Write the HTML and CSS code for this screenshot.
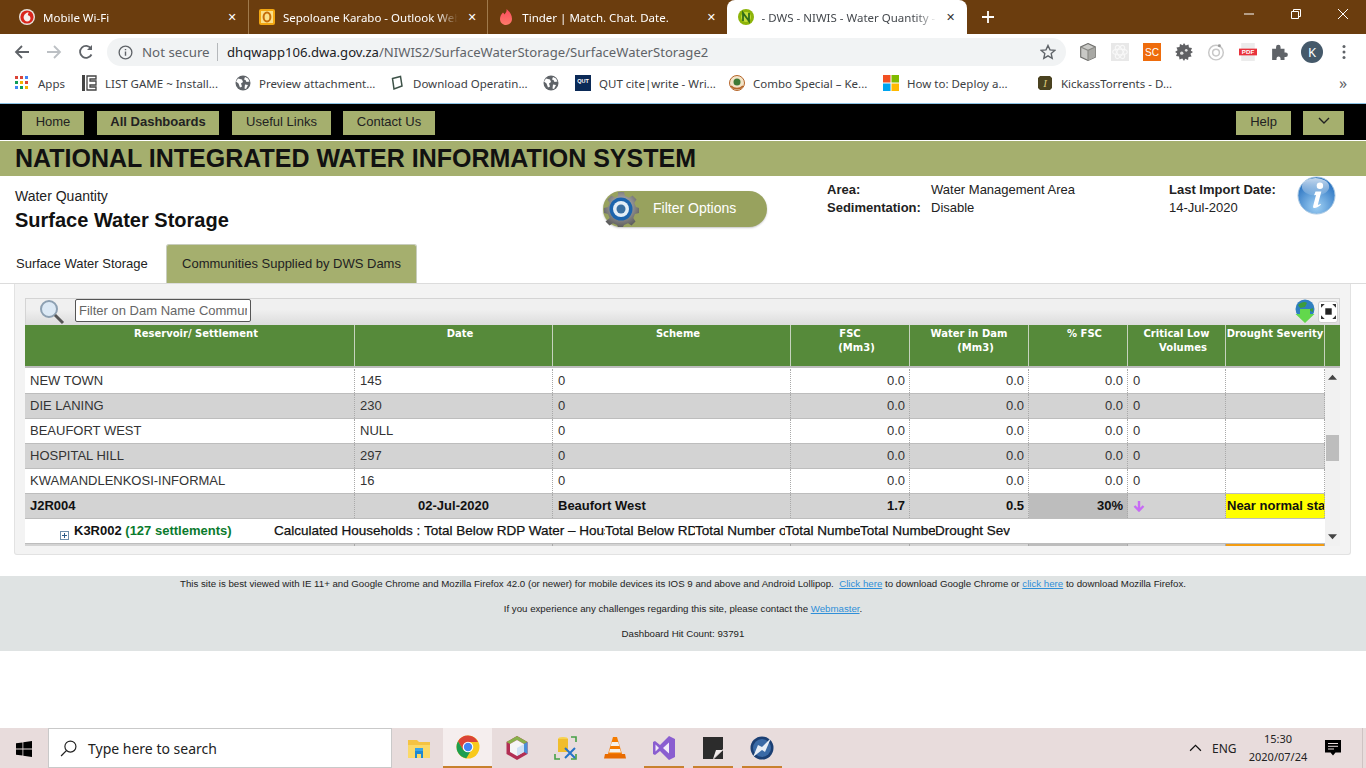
FILE: index.html
```html
<!DOCTYPE html>
<html lang="en">
<head>
<meta charset="utf-8">
<title>DWS - NIWIS - Water Quantity</title>
<link rel="stylesheet" href="styles.css">
</head>
<body>
<div class="tabstrip">
  <div class="tab">
    <svg class="fav" viewBox="0 0 16 16"><circle cx="8" cy="8" r="8" fill="#e8e4e0"/><circle cx="8" cy="8" r="6.600" fill="#d9261c"/><path d="M9.600 3.200C7 3.600 4.600 5.800 4.600 8.600c0 2.400 1.800 3.900 3.600 3.900 2 0 3.300-1.500 3.300-3.200 0-2-1.500-2.700-2.600-3 0-1 .4-1.800.7-3.100z" fill="#f4f0ee"/></svg>
    <span class="tabtitle">Mobile Wi-Fi</span><span class="tabx">✕</span>
  </div>
  <div class="tab tabsep">
    <svg class="fav" viewBox="0 0 16 16"><rect x="0" y="0" width="16" height="16" rx="2" fill="#f3a712"/><rect x="2" y="2" width="12" height="12" fill="#fbe08a"/><ellipse cx="8" cy="8" rx="3.400" ry="4.600" fill="none" stroke="#c46c0a" stroke-width="2"/></svg>
    <span class="tabtitle">Sepoloane Karabo - Outlook Web</span><span class="tabx">✕</span>
  </div>
  <div class="tab tabsep">
    <svg class="fav" viewBox="0 0 16 16"><defs><linearGradient id="tg" x1="0" y1="0" x2="0" y2="1"><stop offset="0" stop-color="#fd4a5e"/><stop offset="1" stop-color="#ff7a6a"/></linearGradient></defs><path d="M8.500 0c.5 3-1 4-2 5.500C6 4.500 5.500 4 5 3.500 3 5.500 2 7.500 2 10c0 3.500 2.700 6 6 6s6-2.500 6-6C14 5.500 11 2 8.500 0z" fill="url(#tg)"/></svg>
    <span class="tabtitle">Tinder | Match. Chat. Date.</span><span class="tabx">✕</span>
  </div>
  <div class="tab tabactive">
    <svg class="fav" viewBox="0 0 16 16"><circle cx="8" cy="8" r="8" fill="#8db40a"/><circle cx="8" cy="8" r="5" fill="#c4dc3a"/><path d="M5 12V4l6 8V4" fill="none" stroke="#2f6d1a" stroke-width="1.800"/></svg>
    <span class="tabtitle">- DWS - NIWIS - Water Quantity -</span><span class="tabx">✕</span>
  </div>
  <svg class="newtab" viewBox="0 0 12 12"><path d="M6 0v12M0 6h12" stroke="#fff" stroke-width="1.800"/></svg>
  <div class="winctl">
    <svg viewBox="0 0 12 12"><path d="M1 6h10" stroke="#fff"/></svg>
    <svg viewBox="0 0 12 12"><path d="M1.500 3.500h7v7h-7zM3.500 3.500v-2h7v7h-2" fill="none" stroke="#fff"/></svg>
    <svg viewBox="0 0 12 12"><path d="M1 1l10 10M11 1L1 11" stroke="#fff"/></svg>
  </div>
</div>

<div class="toolbar">
  <svg class="nav-ic" viewBox="0 0 16 16"><path d="M15 8H2M8 2L2 8l6 6" fill="none" stroke="#5f6368" stroke-width="1.800"/></svg>
  <svg class="nav-ic" viewBox="0 0 16 16"><path d="M1 8h13M8 2l6 6-6 6" fill="none" stroke="#bcc0c4" stroke-width="1.800"/></svg>
  <svg class="nav-ic" viewBox="0 0 16 16"><path d="M13.500 10.500A6 6 0 1 1 13 4.500" fill="none" stroke="#5f6368" stroke-width="1.800"/><path d="M14 1v5H9z" fill="#5f6368"/></svg>
  <div class="omnibox">
    <svg class="info-ic" viewBox="0 0 16 16"><circle cx="8" cy="8" r="6.800" fill="none" stroke="#5f6368" stroke-width="1.400"/><path d="M8 7v4.500M8 4.200v1.500" stroke="#5f6368" stroke-width="1.500"/></svg>
    <span class="notsec">Not secure</span>
    <span class="omnisep"></span>
    <span class="url"><b>dhqwapp106.dwa.gov.za</b>/NIWIS2/SurfaceWaterStorage/SurfaceWaterStorage2</span>
    <svg class="star" viewBox="0 0 16 16"><path d="M8 1.500l2 4.400 4.800.5-3.600 3.200 1 4.700L8 11.900l-4.200 2.400 1-4.700L1.200 6.400 6 5.900z" fill="none" stroke="#5f6368" stroke-width="1.400"/></svg>
  </div>
  <div class="exts">
    <svg viewBox="0 0 16 16"><path d="M8 .5l6.500 3v9L8 15.500l-6.500-3v-9z" fill="#c9c9c6" stroke="#6f6f6c"/><path d="M8 6.500l6.500-3v9L8 15.500z" fill="#a8a8a4"/><path d="M1.500 3.500L8 6.500l6.500-3M8 6.500v9" fill="none" stroke="#8a8a86"/></svg>
    <svg viewBox="0 0 16 16"><rect width="16" height="16" fill="#e8e8e8"/><g fill="none" stroke="#f8f8f8"><ellipse cx="8" cy="8" rx="6.500" ry="2.600"/><ellipse cx="8" cy="8" rx="6.500" ry="2.600" transform="rotate(60 8 8)"/><ellipse cx="8" cy="8" rx="6.500" ry="2.600" transform="rotate(120 8 8)"/></g></svg>
    <svg viewBox="0 0 16 16"><rect width="16" height="16" fill="#ee6c0c"/><text x="8" y="11.500" font-size="9" fill="#fff" text-anchor="middle" font-family="Liberation Sans">SC</text></svg>
    <svg viewBox="0 0 16 16"><path d="M8 0l1.500 2.300 2.500-1 .4 2.700 2.700.4-1 2.500L16 8l-2.300 1.500 1 2.500-2.700.4-.4 2.700-2.500-1L8 16l-1.500-2.300-2.500 1-.4-2.700-2.700-.4 1-2.500L0 8l2.300-1.500-1-2.500 2.700-.4.4-2.700 2.500 1z" fill="#5f6063"/><circle cx="6" cy="9" r="1.500" fill="#e0e0e0"/><circle cx="10" cy="6.500" r="1.200" fill="#e0e0e0"/></svg>
    <svg viewBox="0 0 16 16"><g fill="none" stroke="#c8c8c8" stroke-width="1.300"><circle cx="8" cy="8.500" r="6.500"/><circle cx="8" cy="8.500" r="3"/></g><circle cx="11" cy="2.500" r="1.300" fill="#9a9a9a"/></svg>
    <svg viewBox="0 0 16 16"><rect x="2" y="0" width="12" height="16" fill="#ececec"/><rect x="0" y="5" width="16" height="6" fill="#e8323c"/><text x="8" y="10" font-size="5.500" font-weight="700" fill="#fff" text-anchor="middle" font-family="Liberation Sans">PDF</text></svg>
    <svg viewBox="0 0 16 16"><path d="M1 5h3.500V3.500a2 2 0 0 1 4 0V5H12v3.500h1a2 2 0 0 1 0 4h-1V15H8.500v-1.200a1.800 1.800 0 0 0-3.600 0V15H1z" fill="#5f6368"/></svg>
    <div class="avatar">K</div>
    <svg class="dots" viewBox="0 0 4 16"><circle cx="2" cy="2.500" r="1.500" fill="#5f6368"/><circle cx="2" cy="8" r="1.500" fill="#5f6368"/><circle cx="2" cy="13.500" r="1.500" fill="#5f6368"/></svg>
  </div>
</div>

<div class="bookmarks">
  <div class="bm bm-apps">
    <svg viewBox="0 0 14 14"><g fill="#db4437"><rect x="0" y="0" width="3" height="3"/><rect x="5" y="0" width="3" height="3"/></g><rect x="10" y="0" width="3" height="3" fill="#4285f4"/><rect x="0" y="5" width="3" height="3" fill="#0f9d58"/><rect x="5" y="5" width="3" height="3" fill="#f4b400"/><rect x="10" y="5" width="3" height="3" fill="#db4437"/><rect x="0" y="10" width="3" height="3" fill="#4285f4"/><rect x="5" y="10" width="3" height="3" fill="#0f9d58"/><rect x="10" y="10" width="3" height="3" fill="#f4b400"/></svg>
    <span>Apps</span>
  </div>
  <div class="bm bm-w">
    <svg viewBox="0 0 16 16"><path d="M1 0h3v16H1z" fill="#444"/><path d="M6 1h9v3H9v2h6v4H9v2h6v3H6z" fill="none" stroke="#444" stroke-width="1.300"/></svg>
    <span>LIST GAME ~ Install...</span>
  </div>
  <div class="bm bm-w">
    <svg viewBox="0 0 16 16"><circle cx="8" cy="8" r="7.500" fill="#5f6368"/><path d="M3 3.500l4 1 1 2.500-2 1.500 1 3-2 1-1.500-4L1 6.500zM10 2l3 1.500 1.500 3-3 .5-1-2-1.500-.5zM10 9.500l3 .5-2 4-1.500-.5z" fill="#fff"/></svg>
    <span>Preview attachment...</span>
  </div>
  <div class="bm bm-w">
    <svg viewBox="0 0 16 16"><path d="M3.500 3.500l8-2 1.500 9.500-8 3z" fill="none" stroke="#3d5248" stroke-width="1.500"/></svg>
    <span>Download Operatin...</span>
  </div>
  <div class="bm bm-w bm-globe">
    <svg viewBox="0 0 16 16"><circle cx="8" cy="8" r="7.500" fill="#5f6368"/><path d="M3 3.500l4 1 1 2.500-2 1.500 1 3-2 1-1.500-4L1 6.500zM10 2l3 1.500 1.500 3-3 .5-1-2-1.500-.5zM10 9.500l3 .5-2 4-1.500-.5z" fill="#fff"/></svg>
  </div>
  <div class="bm bm-w">
    <svg viewBox="0 0 16 16"><rect width="16" height="16" fill="#0b2a57"/><text x="8" y="8" font-size="5.500" font-weight="700" fill="#fff" text-anchor="middle" font-family="Liberation Sans">QUT</text></svg>
    <span>QUT cite|write - Wri...</span>
  </div>
  <div class="bm bm-w">
    <svg viewBox="0 0 16 16"><circle cx="8" cy="8" r="7.500" fill="#f2e4c8" stroke="#b5652a"/><circle cx="8" cy="7" r="3.500" fill="#3e7a35"/><path d="M2 11c3 3.500 9 3.500 12 0" stroke="#b5652a" stroke-width="1.600" fill="none"/></svg>
    <span>Combo Special – Ke...</span>
  </div>
  <div class="bm bm-w">
    <svg viewBox="0 0 16 16"><rect width="7.500" height="7.500" fill="#f25022"/><rect x="8.500" width="7.500" height="7.500" fill="#7fba00"/><rect y="8.500" width="7.500" height="7.500" fill="#00a4ef"/><rect x="8.500" y="8.500" width="7.500" height="7.500" fill="#ffb900"/></svg>
    <span>How to: Deploy a...</span>
  </div>
  <div class="bm bm-w">
    <svg viewBox="0 0 16 16"><path d="M1 3l2-2h10l2 2v10l-2 2H3l-2-2z" fill="#4a4220"/><text x="8" y="12" font-size="11" font-style="italic" fill="#dcc97a" text-anchor="middle" font-family="Liberation Serif">I</text></svg>
    <span>KickassTorrents - D...</span>
  </div>
  <span class="bm-more">»</span>
</div>

<nav class="topnav">
  <a class="navbtn nb-home">Home</a>
  <a class="navbtn nb-all">All Dashboards</a>
  <a class="navbtn nb-use">Useful Links</a>
  <a class="navbtn nb-con">Contact Us</a>
  <span class="navgap"></span>
  <a class="navbtn nb-help">Help</a>
  <a class="navbtn nb-chev"><svg viewBox="0 0 12 8"><path d="M1 1l5 5 5-5" fill="none" stroke="#222" stroke-width="1.400"/></svg></a>
</nav>
<header class="banner">NATIONAL INTEGRATED WATER INFORMATION SYSTEM</header>

<section class="info">
  <div class="info-title">
    <div class="it-sub">Water Quantity</div>
    <div class="it-main">Surface Water Storage</div>
  </div>
  <div class="filterbtn">
    <svg class="gear" viewBox="0 0 36 36"><defs><radialGradient id="gg" cx=".5" cy=".4" r=".6"><stop offset="0" stop-color="#c9c9c9"/><stop offset="1" stop-color="#5e5e5e"/></radialGradient></defs><path d="M15 1h6l1 4 4 1.700 3.500-2.200 4 4-2.200 3.500L33 16l3 1v5l-4 1-1.700 4 2.200 3.500-4 4-3.500-2.200-4 1.700-1 2h-5l-1-2-4-1.700-3.500 2.200-4-4L6.700 27 5 23l-4-1v-5l4-1 1.700-4-2.200-3.500 4-4L12 6.700 15 5z" fill="url(#gg)"/><circle cx="18" cy="18" r="11.500" fill="#1c64ad"/><circle cx="18" cy="18" r="8" fill="#e4eef6"/><circle cx="18" cy="18" r="4.500" fill="#3a6fa0"/></svg>
    <span>Filter Options</span>
  </div>
  <div class="meta">
    <b>Area:</b><span>Water Management Area</span>
    <b>Sedimentation:</b><span>Disable</span>
  </div>
  <div class="lastimp">
    <b>Last Import Date:</b>
    <span>14-Jul-2020</span>
  </div>
  <svg class="infoglobe" viewBox="0 0 40 40"><defs><radialGradient id="ig" cx=".5" cy=".8" r=".8"><stop offset="0" stop-color="#9fd0f4"/><stop offset="1" stop-color="#1c68bb"/></radialGradient><linearGradient id="ih" x1="0" y1="0" x2="0" y2="1"><stop offset="0" stop-color="#fff" stop-opacity=".75"/><stop offset="1" stop-color="#fff" stop-opacity=".1"/></linearGradient></defs><circle cx="20" cy="20" r="19" fill="url(#ig)" stroke="#a9c7e2"/><ellipse cx="19" cy="11" rx="14" ry="9" fill="url(#ih)"/><path d="M19 16h6l-3.500 13c-.3 1 .5 1 2.500-.5l.5 1c-3 3-8.500 5-8 1.500l3-11.500-2 .2z" fill="#fff"/><circle cx="23.500" cy="10" r="3.300" fill="#fff"/></svg>
</section>

<div class="pagetabs">
  <div class="ptab">Surface Water Storage</div>
  <div class="ptab ptab-on">Communities Supplied by DWS Dams</div>
</div>

<section class="panel">
  <div class="filterbar">
    <svg class="mag" viewBox="0 0 26 26"><circle cx="10" cy="10" r="8" fill="#dce9f5" stroke="#8da0b2" stroke-width="2"/><path d="M16 16l8 8" stroke="#555" stroke-width="3"/></svg>
    <input class="flt" type="text" placeholder="Filter on Dam Name Community">
    <span class="navgap"></span>
    <svg class="dl" viewBox="0 0 20 24"><circle cx="10" cy="10" r="9.500" fill="#2f7fc0"/><path d="M3 6c3-3 7-4 9-2l-2 4-5 1zM13 11l5-2v4z" fill="#3d9c3d"/><path d="M5 10h10v5h4.500L10 24 .5 15H5z" fill="#62d84c"/></svg>
    <div class="fsbtn"><svg viewBox="0 0 14 14"><rect x="4" y="4" width="6" height="6" fill="#222"/><path d="M0 0h3.500L0 3.500zM14 0v3.500L10.500 0zM0 14v-3.500L3.500 14zM14 14h-3.500L14 10.500z" fill="#333"/></svg></div>
  </div>
  <div class="thead">
    <div class="th off">Reservoir/ Settlement</div>
    <div class="th off">Date</div>
    <div class="th off">Scheme</div>
    <div class="th">FSC<span class="l2">(Mm3)</span></div>
    <div class="th">Water in Dam<span class="l2">(Mm3)</span></div>
    <div class="th off">% FSC</div>
    <div class="th">Critical Low<span class="l2">Volumes</span></div>
    <div class="th">Drought Severity</div>
    <div class="th c9"></div>
  </div>
  <div class="tbodywrap">
    <div class="tbody">
      <div class="tr"><div class="td">NEW TOWN</div><div class="td">145</div><div class="td">0</div><div class="td r">0.0</div><div class="td r">0.0</div><div class="td r">0.0</div><div class="td">0</div><div class="td"></div></div>
      <div class="tr alt"><div class="td">DIE LANING</div><div class="td">230</div><div class="td">0</div><div class="td r">0.0</div><div class="td r">0.0</div><div class="td r">0.0</div><div class="td">0</div><div class="td"></div></div>
      <div class="tr"><div class="td">BEAUFORT WEST</div><div class="td">NULL</div><div class="td">0</div><div class="td r">0.0</div><div class="td r">0.0</div><div class="td r">0.0</div><div class="td">0</div><div class="td"></div></div>
      <div class="tr alt"><div class="td">HOSPITAL HILL</div><div class="td">297</div><div class="td">0</div><div class="td r">0.0</div><div class="td r">0.0</div><div class="td r">0.0</div><div class="td">0</div><div class="td"></div></div>
      <div class="tr"><div class="td">KWAMANDLENKOSI-INFORMAL</div><div class="td">16</div><div class="td">0</div><div class="td r">0.0</div><div class="td r">0.0</div><div class="td r">0.0</div><div class="td">0</div><div class="td"></div></div>
      <div class="tr alt strong"><div class="td">J2R004</div><div class="td ctr">02-Jul-2020</div><div class="td">Beaufort West</div><div class="td r">1.7</div><div class="td r">0.5</div><div class="td r pct">30%</div><div class="td"><svg class="down" viewBox="0 0 12 12"><path d="M6 1v9M1.500 6L6 10.500 10.500 6" fill="none" stroke="#c76bf4" stroke-width="2.400"/></svg></div><div class="td sev-y">Near normal status</div></div>
      <div class="tr sub">
        <svg class="plus" viewBox="0 0 9 9"><rect x=".5" y=".5" width="8" height="8" fill="#fff" stroke="#6d8eaa"/><path d="M2 4.500h5M4.500 2v5" stroke="#2b5b88"/></svg>
        <span class="sub-id">K3R002 <em>(127 settlements)</em></span>
        <div class="sub-cols">
          <span>Calculated Households :</span>
          <span>Total Below RDP Water – Households</span>
          <span>Total Below RDP Sanitation</span>
          <span>Total Number of Households</span>
          <span>Total Number of</span>
          <span>Total Number of</span>
          <span>Drought Severity</span>
        </div>
      </div>
      <div class="tr alt strong"><div class="td"></div><div class="td"></div><div class="td"></div><div class="td"></div><div class="td"></div><div class="td pct"></div><div class="td"></div><div class="td sev-o"></div></div>
    </div>
    <div class="vscroll">
      <svg class="sarrow" viewBox="0 0 10 6"><path d="M0 6l5-5.500L10 6z" fill="#444"/></svg>
      <div class="strack"><div class="sthumb"></div></div>
      <svg class="sarrow" viewBox="0 0 10 6"><path d="M0 0l5 5.500L10 0z" fill="#444"/></svg>
    </div>
  </div>
</section>

<footer class="foot">
  <p>This site is best viewed with IE 11+ and Google Chrome and Mozilla Firefox 42.0 (or newer) for mobile devices its IOS 9 and above and Android Lollipop. &nbsp;<a>Click here</a> to download Google Chrome or <a>click here</a> to download Mozilla Firefox.</p>
  <p>If you experience any challenges regarding this site, please contact the <a>Webmaster</a>.</p>
  <p>Dashboard Hit Count: 93791</p>
</footer>

<div class="spacer"></div>

<div class="taskbar">
  <svg class="winlogo" viewBox="0 0 16 16"><path d="M0 2.300L6.500 1.400v6.200H0zM7.300 1.300L16 0v7.600H7.300zM0 8.400h6.500v6.200L0 13.700zM7.300 8.400H16V16l-8.700-1.300z" fill="#000"/></svg>
  <div class="tsearch">
    <svg viewBox="0 0 16 16"><circle cx="9.800" cy="6.200" r="5.200" fill="none" stroke="#222" stroke-width="1.100"/><path d="M6 10L1 15" stroke="#222" stroke-width="1.200"/></svg>
    <span>Type here to search</span>
  </div>
  <div class="tapps">
    <div class="tapp">
      <svg viewBox="0 0 24 24"><path d="M1 4h9l2 2h11v16H1z" fill="#f5c342"/><path d="M1 9h22v13H1z" fill="#fbd968"/><path d="M8 14h8v8h-2v-4h-4v4H8z" fill="#1e88d2"/><path d="M8 12h8v3H8z" fill="#37a3e8"/></svg>
    </div>
    <div class="tapp tapp-on">
      <svg viewBox="0 0 24 24"><circle cx="12" cy="12" r="11.500" fill="#f8c91c"/><path d="M12 .5A11.500 11.500 0 0 0 2 6.300l5.200 9L12 7h10A11.500 11.500 0 0 0 12 .5z" fill="#db4437"/><path d="M2 6.300a11.500 11.500 0 0 0 8.300 17l5-8.400-8 .4z" fill="#1d9e50"/><circle cx="12" cy="12" r="5.300" fill="#fff"/><circle cx="12" cy="12" r="4.200" fill="#4285f4"/></svg>
    </div>
    <div class="tapp">
      <svg viewBox="0 0 24 24"><path d="M12 0l10.500 6v12L12 24 1.500 18V6z" fill="#b22f54"/><path d="M12 0l10.500 6-3.500 2-7-4-7 4-3.500-2z" fill="#88b04b"/><path d="M22.500 6v12L19 16V8z" fill="#4a90d9"/><path d="M12 4l7 4v8l-7 4-7-4V8z" fill="#f6f6f6"/><path d="M12 12l7-4v8l-7 4z" fill="#cfe2f5"/></svg>
    </div>
    <div class="tapp">
      <svg viewBox="0 0 24 24"><ellipse cx="9" cy="3" rx="5" ry="2" fill="#f7d24e"/><path d="M4 3h10v13H4z" fill="#f0bd2c"/><path d="M17 1h5v5M22 18v5h-5M6 23H1v-5" fill="none" stroke="#46a046" stroke-width="1.600"/><path d="M11 12l10 10M21 12L11 22" stroke="#2673c9" stroke-width="2"/></svg>
    </div>
    <div class="tapp">
      <svg viewBox="0 0 24 24"><path d="M10 1h4l5 17H5z" fill="#f57c00"/><path d="M8.800 6h6.400l1.200 4H7.600zM7 13h10l1 3.500H6z" fill="#f5f2ec"/><path d="M2 18h20l1 4.500H1z" fill="#e86b00"/></svg>
    </div>
    <div class="tapp tapp-run">
      <svg viewBox="0 0 24 24"><path d="M17 0l6 3v18l-6 3-9-9-5 4-2-1V6l2-1 5 4z" fill="#8a5ed0"/><path d="M17 6.500L11 12l6 5.500z" fill="#f2ecfa"/><path d="M3.500 8.500v7L7 12z" fill="#f2ecfa"/></svg>
    </div>
    <div class="tapp tapp-run">
      <svg viewBox="0 0 24 24"><path d="M2 1h20v12L12 23H2z" fill="#2c2c2c"/><path d="M22 14v9H13z" fill="#2c2c2c"/><path d="M12 23l3-9h7z" fill="#f2ecec"/></svg>
    </div>
    <div class="tapp tapp-run">
      <svg viewBox="0 0 24 24"><circle cx="12" cy="12" r="11.500" fill="#1b3f73"/><circle cx="12" cy="12" r="9" fill="#3a6aa6"/><path d="M21 2L12 11 8 9 3 21l9-7 3 2z" fill="#e8eef6"/></svg>
    </div>
  </div>
  <span class="navgap"></span>
  <div class="tray">
    <svg class="chev" viewBox="0 0 12 7"><path d="M1 6l5-5 5 5" fill="none" stroke="#111" stroke-width="1.100"/></svg>
    <span class="eng">ENG</span>
    <div class="clock"><span>15:30</span><span>2020/07/24</span></div>
    <svg class="notif" viewBox="0 0 16 16"><path d="M0 0h16v12.500h-5.500L8 15.500l-2.500-3H0z" fill="#000"/><path d="M3 3.500h10M3 6.300h10M3 9h6" stroke="#e8dcdc" stroke-width="1"/></svg>
    <span class="deskline"></span>
  </div>
</div>
</body>
</html>
```

FILE: styles.css
```css
* { box-sizing: border-box; }
html, body { margin: 0; padding: 0; }
body {
  width: 1366px;
  height: 768px;
  overflow: hidden;
  display: flex;
  flex-direction: column;
  background: #fff;
  font-family: "Liberation Sans", Arial, sans-serif;
  color: #111;
}

/* browser chrome */
.tabstrip {
  height: 34px;
  flex: none;
  display: flex;
  align-items: stretch;
  padding-left: 8px;
  background: #6b3d0e;
  color: #fff;
  font-family: "Noto Sans", sans-serif;
  font-size: 11.500px;
}
.tab {
  width: 240px;
  flex: none;
  display: flex;
  align-items: center;
  padding-left: 11px;
}
.tab + .tab { width: 239.300px; }
.tabsep { box-shadow: inset 1px 0 0 #a07a4c; }
.tab + .tabactive {
  width: 240px;
  background: #fff;
  color: #45494e;
  border-radius: 8px 8px 0 0;
}
.fav { width: 16px; height: 16px; flex: none; margin-right: 8px; }
.tabtitle {
  width: 175px;
  overflow: hidden;
  white-space: nowrap;
  flex: none;
  -webkit-mask-image: linear-gradient(90deg, #000 88%, transparent 100%);
  mask-image: linear-gradient(90deg, #000 88%, transparent 100%);
}
.tabx {
  width: 28px;
  flex: none;
  text-align: center;
  font-size: 11px;
  font-family: "DejaVu Sans", sans-serif;
}
.tabactive .tabx { color: #333; }
.newtab { width: 12px; height: 12px; margin: 11px 0 0 15px; flex: none; }
.winctl {
  margin-left: auto;
  display: flex;
  align-items: center;
  gap: 35px;
  padding: 0 17px 6px 0;
}
.winctl svg { width: 12px; height: 12px; }

.toolbar {
  height: 34px;
  flex: none;
  display: flex;
  align-items: center;
  padding: 2px 0 0 14px;
  gap: 16px;
}
.nav-ic { width: 16px; height: 16px; flex: none; }
.omnibox {
  width: 959px;
  height: 28px;
  margin-left: -3px;
  flex: none;
  display: flex;
  align-items: center;
  padding-left: 11px;
  border-radius: 14px;
  background: #f1f3f4;
  font-family: "Noto Sans", sans-serif;
  font-size: 13.100px;
  color: #5f6368;
  white-space: nowrap;
}
.info-ic { width: 15px; height: 15px; flex: none; margin-right: 9px; }
.notsec { width: 67px; flex: none; font-size: 13.300px; }
.omnisep { width: 1px; height: 18px; margin: 0 9px 0 8px; background: #b5b8bb; flex: none; }
.url b { font-weight: 400; color: #202124; }
.star { width: 16px; height: 16px; margin-left: auto; margin-right: 10px; flex: none; }
.exts {
  display: flex;
  align-items: center;
  gap: 14px;
  margin-left: -3px;
  flex: none;
}
.exts svg { width: 18px; height: 18px; flex: none; }
.avatar {
  width: 22px;
  height: 22px;
  margin: 0 -2px;
  border-radius: 50%;
  background: #45596a;
  color: #fff;
  font: 13px/22px "Noto Sans", sans-serif;
  text-align: center;
}
.exts .dots { width: 4px; height: 16px; margin-left: 7px; }

.bookmarks {
  height: 32px;
  flex: none;
  display: flex;
  align-items: center;
  padding: 0 0 2px 15px;
  font-family: "Noto Sans", sans-serif;
  font-size: 11.500px;
  color: #3c4043;
  white-space: nowrap;
}
.bm { display: flex; align-items: center; flex: none; }
.bm svg { width: 16px; height: 16px; flex: none; margin-right: 8px; }
.bm-apps { width: 66px; }
.bm-apps svg { width: 14px; height: 14px; margin-right: 9px; }
.bm-w { width: 154px; overflow: hidden; }
.bm-w.bm-globe { width: 32px; }
.bm-more { margin-left: 148px; font-size: 16px; color: #5f6368; line-height: 16px; }

/* site navigation */
.topnav {
  height: 37px;
  margin-top: 3px;
  flex: none;
  display: flex;
  align-items: center;
  padding: 1px 22px 0;
  background: #000;
  border-top: 1px solid #8cc3e6;
}
.navbtn {
  height: 24px;
  padding-bottom: 3px;
  display: flex;
  align-items: center;
  justify-content: center;
  flex: none;
  background: #a5af6e;
  color: #222;
  font-size: 13px;
}
.nb-home { width: 62px; }
.nb-all { width: 122px; margin-left: 13px; font-weight: 700; }
.nb-use { width: 99px; margin-left: 13px; }
.nb-con { width: 92px; margin-left: 12px; }
.nb-help { width: 55px; }
.nb-chev { width: 41px; margin-left: 12px; }
.nb-chev svg { width: 12px; height: 8px; }
.navgap { flex: 1; }
.banner {
  height: 35px;
  margin-top: 1px;
  flex: none;
  padding-left: 15px;
  background: #a5af6e;
  color: #111;
  font-size: 25px;
  font-weight: 700;
  line-height: 35px;
  white-space: nowrap;
}

/* info block */
.info {
  height: 68px;
  flex: none;
  display: flex;
  align-items: flex-start;
  padding-left: 15px;
  font-size: 13px;
  color: #222;
}
.info-title { width: 588px; padding-top: 12px; flex: none; }
.it-sub { font-size: 14px; line-height: 16px; }
.it-main { margin-top: 4px; font-size: 20px; font-weight: 700; line-height: 24px; color: #111; }
.filterbtn {
  width: 164px;
  height: 36px;
  margin-top: 15px;
  flex: none;
  display: flex;
  align-items: center;
  border-radius: 18px;
  background: #98a25e;
  box-shadow: 0 1px 2px #c5c5c5;
  color: #fff;
  font-size: 14px;
}
.filterbtn span { padding-bottom: 2px; }
.gear { width: 36px; height: 36px; flex: none; margin-right: 14px; }
.meta {
  width: 342px;
  margin: 5px 0 0 60px;
  flex: none;
  display: grid;
  grid-template-columns: 104px 1fr;
  grid-auto-rows: 18px;
  line-height: 18px;
}
.lastimp {
  width: 128px;
  margin-top: 5px;
  flex: none;
  display: flex;
  flex-direction: column;
  line-height: 18px;
}
.infoglobe { width: 39px; height: 39px; flex: none; }

.pagetabs {
  height: 40px;
  flex: none;
  display: flex;
  align-items: stretch;
  padding-left: 16px;
  font-size: 13px;
  color: #222;
  border-bottom: 1px solid #dcdcdc;
}
.ptab { display: flex; align-items: center; width: 150px; flex: none; padding-bottom: 1px; white-space: nowrap; }
.ptab-on {
  width: 251px;
  justify-content: center;
  padding-bottom: 2px;
  background: #a5af6e;
  border: 1px solid #c8cdbd;
  border-bottom: none;
  border-radius: 3px 3px 0 0;
}

/* data panel */
.panel {
  height: 271px;
  margin: 0 15px 0 14px;
  flex: none;
  padding: 14px 10px 0 10px;
  background: #f3f3f3;
  border: 1px solid #e2e2e2;
  border-top: none;
  border-radius: 0 0 3px 3px;
}
.filterbar {
  height: 27px;
  display: flex;
  align-items: center;
  padding-left: 13px;
  background: linear-gradient(#f0f0f0 0, #f0f0f0 40%, #dcdcdc 100%);
  border: 1px solid #d4d4d4;
  border-bottom: none;
}
.mag { width: 26px; height: 26px; flex: none; margin-right: 10px; }
.flt {
  width: 176px;
  height: 23px;
  padding: 0 3px;
  flex: none;
  align-self: flex-start;
  background: #fff;
  border: 1px solid #555;
  border-radius: 2px;
  font: 13px "Liberation Sans", sans-serif;
}
.flt::placeholder { color: #666; opacity: 1; }
.dl { width: 20px; height: 24px; flex: none; margin: 0 3px 2px 0; }
.fsbtn {
  width: 20px;
  height: 22px;
  margin: 0 1px 1px 0;
  flex: none;
  display: flex;
  align-items: center;
  justify-content: center;
  background: #fff;
  border: 1px solid #cfcfcf;
  border-radius: 3px;
}
.fsbtn svg { width: 15px; height: 15px; }

.thead {
  height: 43px;
  display: grid;
  grid-template-columns: 330px 198px 238px 119px 119px 99px 98px 99px 15px;
  background: #568a3a;
  border-bottom: 2px solid #bdbdbd;
}
.th {
  padding-top: 2px;
  border-right: 1px solid #c6d3bd;
  color: #fff;
  font: 700 10px/14px "DejaVu Sans", sans-serif;
  text-align: center;
  white-space: nowrap;
  overflow: hidden;
}
.th.off { padding-left: 13px; }
.th .l2 { display: block; padding-left: 13px; }
.th.c9 { border-right: none; }

.tbodywrap {
  height: 178px;
  display: flex;
  overflow: hidden;
}
.tbody { width: 1300px; padding-top: 1px; flex: none; background: #fff; overflow: hidden; }
.tr {
  height: 25px;
  display: grid;
  grid-template-columns: 330px 198px 238px 119px 119px 99px 98px 99px;
  grid-template-rows: 24px;
  border-bottom: 1px solid #bdbdbd;
  background: #fff;
  font-size: 13px;
  line-height: 24px;
  color: #333;
}
.tr.alt { background: #d3d3d3; }
.tr.strong { font-weight: 700; color: #111; }
.td {
  padding: 0 5px;
  border-right: 1px dotted #a9a9a9;
  white-space: nowrap;
  overflow: hidden;
}
.td.r { padding: 0 4px 0 0; text-align: right; }
.td.ctr { text-align: center; }
.td.pct { background: #bdbdbd; }
.td.sev-y { padding: 0 1px; background: #ff0; color: #111; }
.td.sev-o { background: #f39c12; }
.down { width: 12px; height: 12px; vertical-align: -2px; }
.tr.sub {
  display: flex;
  align-items: center;
  color: #111;
}
.plus { width: 9px; height: 9px; margin: 9px 0 0 35px; flex: none; }
.sub-id { width: 205px; padding-left: 5px; flex: none; font-weight: 700; white-space: nowrap; }
.sub-id em { font-style: normal; color: #0a7a2c; }
.sub-cols {
  display: grid;
  grid-template-columns: 150px 181px 90px 90px 75px 75px 75px;
  font-size: 13.500px;
}
.sub-cols span { overflow: hidden; white-space: nowrap; -webkit-text-stroke: .25px #111; }
.vscroll {
  width: 15px;
  flex: none;
  display: flex;
  flex-direction: column;
  align-items: center;
  background: #f1f1f1;
}
.sarrow { width: 9px; height: 6px; flex: none; margin: 6px 0; }
.strack { flex: 1; width: 100%; padding: 49px 1px 0; }
.sthumb { height: 26px; background: #bdbdbd; }

/* footer */
.foot {
  height: 75px;
  margin-top: 21px;
  flex: none;
  padding-top: 2px;
  background: #dfe3e3;
  color: #222;
  font-size: 9.700px;
  text-align: center;
}
.foot p { margin: 0; height: 25px; line-height: 11px; }
.foot a { color: #2f8fd8; text-decoration: underline; }
.spacer { flex: 1; }

/* taskbar */
.taskbar {
  height: 40px;
  flex: none;
  display: flex;
  align-items: stretch;
  background: #e8dcdc;
  font-family: "Noto Sans", sans-serif;
}
.winlogo { width: 16px; height: 16px; margin: 13px 16px 0 16px; flex: none; }
.tsearch {
  width: 344px;
  flex: none;
  display: flex;
  align-items: center;
  padding-left: 11px;
  background: #fff;
  border: 1px solid #c9c9c9;
  font-size: 14px;
  color: #222;
}
.tsearch svg { width: 17px; height: 17px; margin-right: 11px; flex: none; }
.tapps { display: flex; margin-left: 2px; }
.tapp {
  width: 49px;
  flex: none;
  display: flex;
  align-items: center;
  justify-content: center;
}
.tapp svg { width: 24px; height: 24px; }
.tapp-run { background: linear-gradient(#c8812e, #c8812e) center bottom / 40px 2px no-repeat; }
.tapp-on { background: #f5eeee; border-bottom: 2px solid #c8812e; }
.tray {
  display: flex;
  align-items: center;
  padding-right: 3px;
  font-size: 12px;
  color: #222;
}
.chev { width: 13px; height: 8px; flex: none; margin-right: 10px; }
.eng { width: 24px; margin-right: 7px; }
.clock { width: 70px; display: flex; flex-direction: column; align-items: center; font-size: 11px; line-height: 18px; }
.notif { width: 16px; height: 16px; margin-left: 12px; flex: none; }
.deskline { width: 1px; height: 40px; margin-left: 21px; background: #cfc3c3; }
```
